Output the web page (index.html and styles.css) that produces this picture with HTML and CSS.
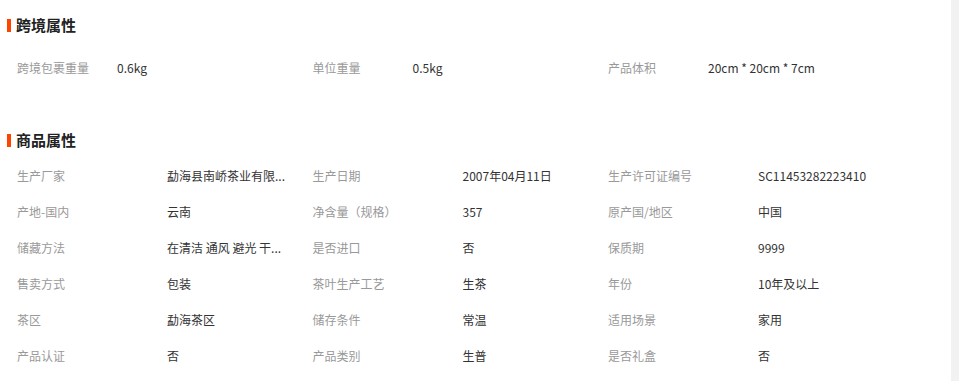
FILE: index.html
```html
<!DOCTYPE html>
<html lang="zh-CN">
<head>
<meta charset="utf-8">
<title>商品属性</title>
<link rel="stylesheet" href="styles.css">
</head>
<body>
<div class="panel">
  <section class="section section-first">
    <h2 class="section-title">跨境属性</h2>
    <ul class="attr-list attr-list-narrow">
      <li class="attr"><span class="attr-label">跨境包裹重量</span><span class="attr-value">0.6kg</span></li>
      <li class="attr"><span class="attr-label">单位重量</span><span class="attr-value">0.5kg</span></li>
      <li class="attr"><span class="attr-label">产品体积</span><span class="attr-value">20cm * 20cm * 7cm</span></li>
    </ul>
  </section>
  <section class="section section-second">
    <h2 class="section-title">商品属性</h2>
    <ul class="attr-list">
      <li class="attr"><span class="attr-label">生产厂家</span><span class="attr-value" title="勐海县南峤茶业有限公司">勐海县南峤茶业有限...</span></li>
      <li class="attr"><span class="attr-label">生产日期</span><span class="attr-value">2007年04月11日</span></li>
      <li class="attr"><span class="attr-label">生产许可证编号</span><span class="attr-value">SC11453282223410</span></li>
      <li class="attr"><span class="attr-label">产地-国内</span><span class="attr-value">云南</span></li>
      <li class="attr"><span class="attr-label">净含量（规格）</span><span class="attr-value">357</span></li>
      <li class="attr"><span class="attr-label">原产国/地区</span><span class="attr-value">中国</span></li>
      <li class="attr"><span class="attr-label">储藏方法</span><span class="attr-value" title="在清洁 通风 避光 干燥 无异味的环境下储存">在清洁 通风 避光 干...</span></li>
      <li class="attr"><span class="attr-label">是否进口</span><span class="attr-value">否</span></li>
      <li class="attr"><span class="attr-label">保质期</span><span class="attr-value">9999</span></li>
      <li class="attr"><span class="attr-label">售卖方式</span><span class="attr-value">包装</span></li>
      <li class="attr"><span class="attr-label">茶叶生产工艺</span><span class="attr-value">生茶</span></li>
      <li class="attr"><span class="attr-label">年份</span><span class="attr-value">10年及以上</span></li>
      <li class="attr"><span class="attr-label">茶区</span><span class="attr-value">勐海茶区</span></li>
      <li class="attr"><span class="attr-label">储存条件</span><span class="attr-value">常温</span></li>
      <li class="attr"><span class="attr-label">适用场景</span><span class="attr-value">家用</span></li>
      <li class="attr"><span class="attr-label">产品认证</span><span class="attr-value">否</span></li>
      <li class="attr"><span class="attr-label">产品类别</span><span class="attr-value">生普</span></li>
      <li class="attr"><span class="attr-label">是否礼盒</span><span class="attr-value">否</span></li>
    </ul>
  </section>
</div>
</body>
</html>
```

FILE: styles.css
```css
html, body {
  margin: 0;
  padding: 0;
}
body {
  background: #f2f2f2;
  font-family: "Noto Sans CJK SC", "Microsoft YaHei", sans-serif;
  font-size: 12px;
  color: #333;
  height: 381px;
  overflow: hidden;
}
.panel {
  width: 951px;
  height: 381px;
  background: #fff;
  padding: 15px 0 0 7px;
  box-sizing: border-box;
}
.section-title {
  margin: 0;
  height: 20px;
  line-height: 20px;
  font-size: 15px;
  font-weight: bold;
  color: #222;
  display: flex;
  align-items: center;
  gap: 5px;
}
.section-title::before {
  content: "";
  width: 4px;
  height: 13px;
  background: #ff4400;
}
.section-second {
  margin-top: 45px;
}
.attr-list {
  list-style: none;
  margin: 7px 0 0 0;
  padding: 0 0 0 10px;
  display: grid;
  grid-template-columns: repeat(3, 295.5px);
}
.section-first .attr-list {
  margin-top: 14px;
}
.attr {
  display: flex;
  height: 36px;
  align-items: center;
  white-space: nowrap;
}
.attr-label {
  width: 150px;
  flex: none;
  color: #999;
}
.attr-list-narrow .attr-label {
  width: 100px;
}
.attr-value {
  color: #333;
}
```
